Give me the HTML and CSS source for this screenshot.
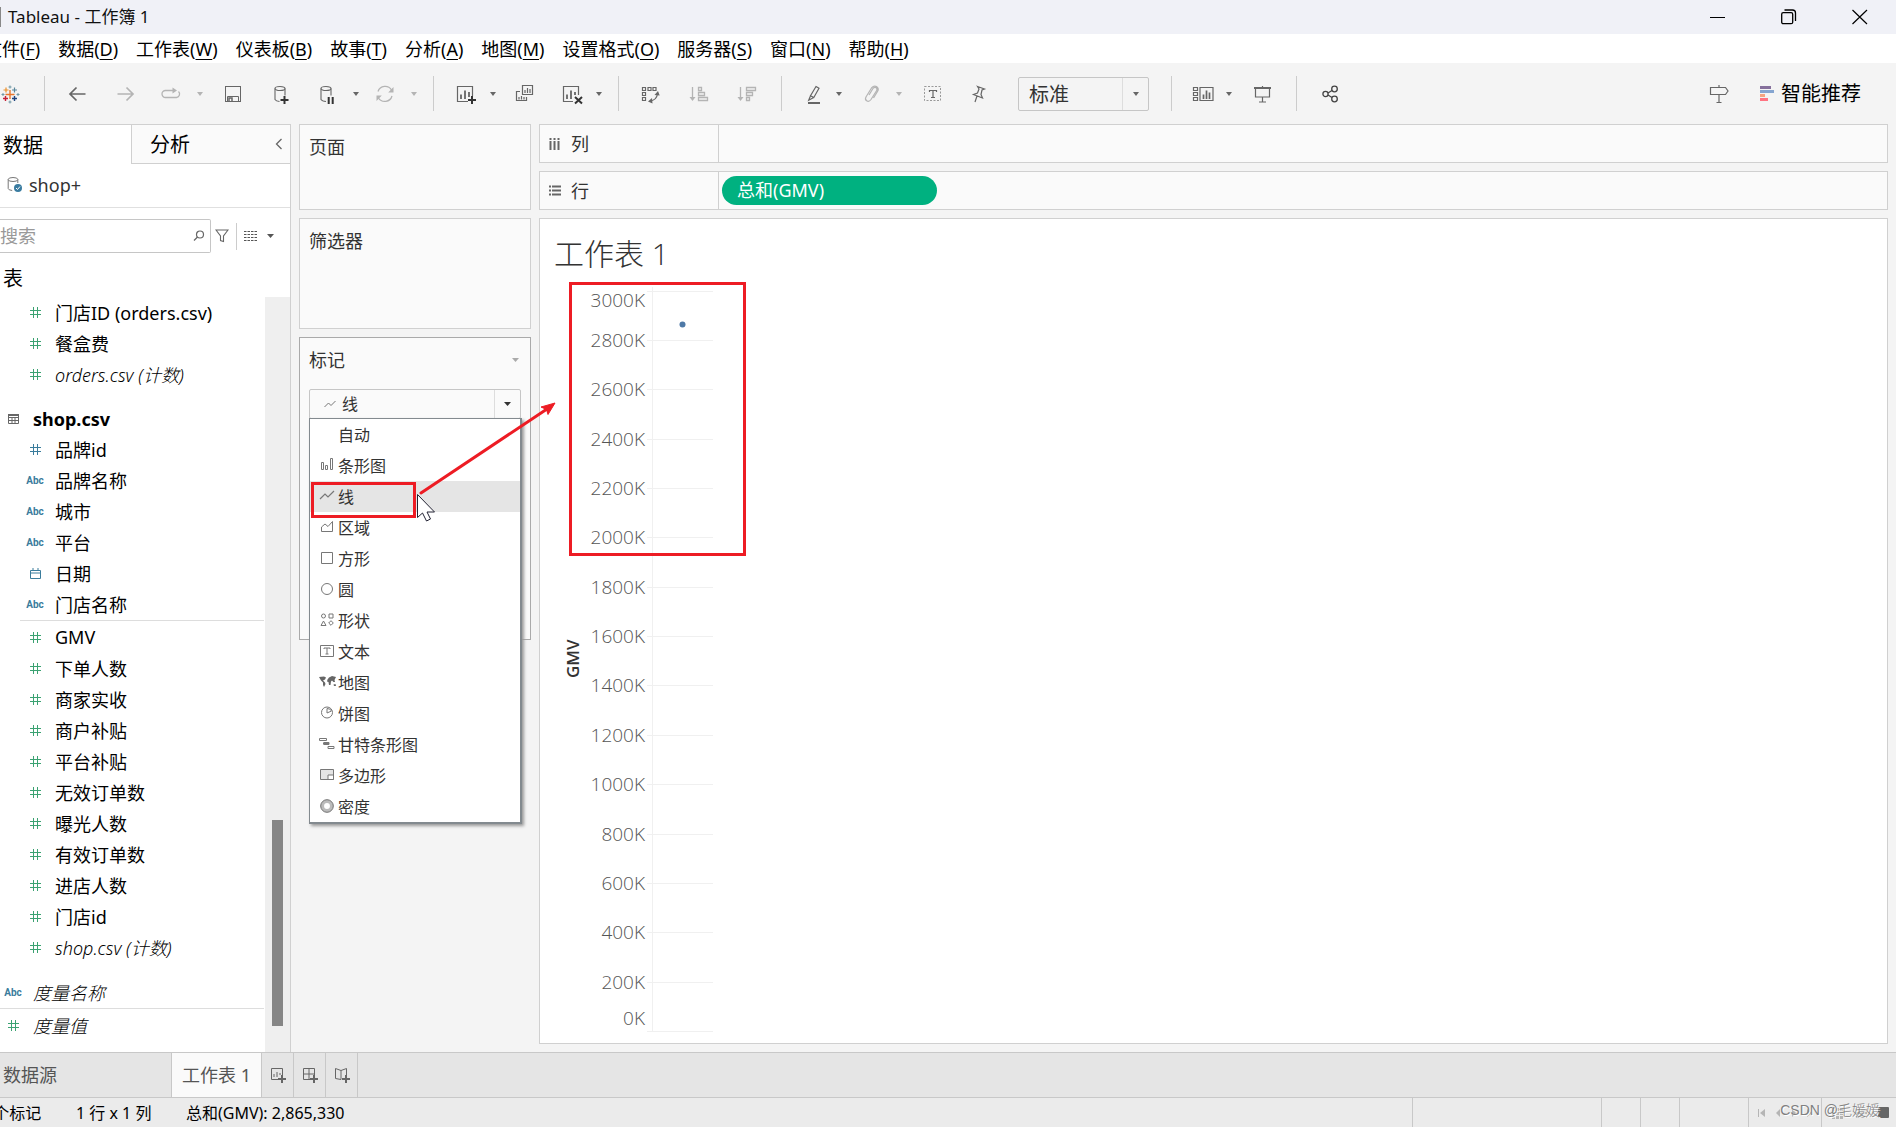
FILE: index.html
```html
<!DOCTYPE html>
<html lang="zh-CN">
<head>
<meta charset="utf-8">
<title>Tableau - 工作簿 1</title>
<link rel="stylesheet" href="styles.css">
</head>
<body>
<svg class="sprite" aria-hidden="true">
  <symbol id="hash" viewBox="0 0 11 11"><path d="M3.5 0v11M7.5 0v11M0 3.5h11M0 7.5h11" stroke="currentColor"/></symbol>
  <symbol id="caret" viewBox="0 0 10 6"><path d="M2 1h6L5 5z" fill="currentColor"/></symbol>
</svg>
<div class="app">
  <header class="titlebar">
    <span class="app-edge"></span>
    <h1>Tableau - 工作簿 1</h1>
    <div class="window-buttons">
      <button aria-label="最小化"><svg width="16" height="16"><path d="M0 8.5h15" stroke="#000"/></svg></button>
      <button aria-label="还原"><svg width="16" height="16" fill="none" stroke="#000"><rect x=".7" y="3.7" width="11" height="11" rx="1.5" stroke-width="1.3"/><path d="M3.5 1h8q3 0 3 3v8" stroke-width="1.3"/></svg></button>
      <button aria-label="关闭"><svg width="16" height="16"><path d="M.5 1l14.500 14M15 1L.5 15" stroke="#000" stroke-width="1.2"/></svg></button>
    </div>
  </header>

  <nav class="menubar">
    <button>文件(<u>F</u>)</button>
    <button>数据(<u>D</u>)</button>
    <button>工作表(<u>W</u>)</button>
    <button>仪表板(<u>B</u>)</button>
    <button>故事(<u>T</u>)</button>
    <button>分析(<u>A</u>)</button>
    <button>地图(<u>M</u>)</button>
    <button>设置格式(<u>O</u>)</button>
    <button>服务器(<u>S</u>)</button>
    <button>窗口(<u>N</u>)</button>
    <button>帮助(<u>H</u>)</button>
  </nav>

  <div class="toolbar">
    <button class="tool" aria-label="开始页面"><svg width="24" height="24" fill="none"><path d="M12 8v9M7.500 12.500h9" stroke="#e8762c" stroke-width="1.400"/><path d="M5.500 8h5M8 5.500v5" stroke="#eb912c" stroke-width="1.200"/><path d="M14 8h5M16.500 5.500v5" stroke="#59879b" stroke-width="1.200"/><path d="M5 16.500h5M7.500 14v5" stroke="#c72035" stroke-width="1.400"/><path d="M14 16.500h5M16.500 14v5" stroke="#1f447e" stroke-width="1.400"/><path d="M10.500 5h3M12 3.500v3M10.500 20h3M12 18.500v3M3.500 12.500h3M5 11v3M18.500 12.500h3M20 11v3" stroke="#7199a6"/></svg></button>
    <span class="sep g22"></span>
    <button class="tool g20" aria-label="撤消"><svg width="24" height="24" fill="none" stroke="currentColor" stroke-width="1.700"><path d="M20.500 12H5M11.500 5.500L5 12l6.500 6.500"/></svg></button>
    <button class="tool off g24" aria-label="重做"><svg width="24" height="24" fill="none" stroke="currentColor" stroke-width="1.700"><path d="M4.500 12H20M13.500 5.500L20 12l-6.500 6.500"/></svg></button>
    <button class="tool off g22" aria-label="重播"><svg width="24" height="24" fill="none" stroke="currentColor" stroke-width="1.300"><path d="M15 8.500H6.500a3.500 3.500 0 0 0 0 7h11a3.500 3.500 0 0 0 2-6"/><path d="M13.500 5.500l4.500 3-4.500 3z" fill="currentColor" stroke="none"/></svg></button>
    <button class="drop off g12" aria-label="重播选项"><svg width="10" height="6"><use href="#caret"/></svg></button>
    <button class="tool g16" aria-label="保存"><svg width="24" height="24" fill="none" stroke="currentColor"><rect x="4.500" y="4.500" width="15" height="15"/><path d="M6.500 19v-4.500h11V19"/><path d="M8 19v-3h3v3" stroke-width="1.500"/></svg></button>
    <button class="tool g24" aria-label="新建数据源"><svg width="24" height="24" fill="none" stroke="currentColor" stroke-width="1.100"><ellipse cx="11" cy="6.500" rx="5" ry="2"/><path d="M6 6.500v11q1 1.700 4.500 2M16 6.500v7"/><path d="M15.500 14v8M11.500 18h8" stroke="#333" stroke-width="2"/></svg></button>
    <button class="tool g22" aria-label="暂停自动更新"><svg width="24" height="24" fill="none" stroke="currentColor" stroke-width="1.100"><ellipse cx="11" cy="6.500" rx="5" ry="2"/><path d="M6 6.500v11q1 1.700 5 2M16 6.500v7"/><path d="M13.700 15v7M17.700 15v7" stroke="#333" stroke-width="2"/></svg></button>
    <button class="drop g12" aria-label="自动更新选项"><svg width="10" height="6"><use href="#caret"/></svg></button>
    <button class="tool off g12" aria-label="运行更新"><svg width="24" height="24" fill="none" stroke="currentColor" stroke-width="1.300"><path d="M5 9.500a7.500 7.500 0 0 1 13.500-1.500M19 14a7.500 7.500 0 0 1-13.500 2"/><path d="M20.500 5v5.500h-5.300zM3.500 19v-5.500h5.300z" fill="currentColor" stroke="none"/></svg></button>
    <button class="drop off g12" aria-label="运行更新选项"><svg width="10" height="6"><use href="#caret"/></svg></button>
    <span class="sep g14"></span>
    <button class="tool g20" aria-label="新建工作表"><svg width="24" height="24" fill="none" stroke="currentColor"><path d="M14 19.500H3.500v-15h15V14" stroke-width="1.200"/><path d="M7 12.500V17M11 8.500V17M15 10v5" stroke-width="1.800"/><path d="M18 14v8M14 18h8" stroke="#333" stroke-width="2"/></svg></button>
    <button class="drop g10" aria-label="新建工作表选项"><svg width="10" height="6"><use href="#caret"/></svg></button>
    <button class="tool g14" aria-label="复制工作表"><svg width="24" height="24" fill="none" stroke="currentColor" stroke-width="1.200"><path d="M10.500 3.500h10v9h-10zM8 9.500H4.500v9h10V15"/><path d="M13 8v3M15.500 6v5M18 7v4M7 15v2.500M9.500 14v3.500M12 15v2.500"/></svg></button>
    <button class="tool g24" aria-label="清除工作表"><svg width="24" height="24" fill="none" stroke="currentColor"><path d="M13 19.500H3.500v-15h15V13" stroke-width="1.200"/><path d="M7 12.500V17M11 8.500V17M15 10v3" stroke-width="1.800"/><path d="M15 15l7 6.500M22 15l-7 6.500" stroke="#333" stroke-width="2"/></svg></button>
    <button class="drop g10" aria-label="清除工作表选项"><svg width="10" height="6"><use href="#caret"/></svg></button>
    <span class="sep g14"></span>
    <button class="tool g20" aria-label="交换行和列"><svg width="24" height="24" fill="none" stroke="currentColor" stroke-width="1.200"><path d="M3.500 5.500h3v3h-3zM9 5.500h3v3H9zM14 5.500h3v3h-3zM3.500 10.500h3v3h-3zM3.500 15.500h3v3h-3z"/><path d="M18.500 12q-1 6-7 7"/><path d="M15.500 13l3.500-4 1.700 4.500zM13 16l-4 3.500 4.500 2z" fill="currentColor" stroke="none"/></svg></button>
    <button class="tool off g24" aria-label="升序排序"><svg width="24" height="24" fill="none" stroke="currentColor" stroke-width="1.300"><path d="M5.500 5v12M11.500 5.500h3v3h-3zM11.500 10.500h6v3h-6zM11.500 15.500h9v3h-9z"/><path d="M2.500 15h6l-3 4z" fill="currentColor" stroke="none"/></svg></button>
    <button class="tool off g24" aria-label="降序排序"><svg width="24" height="24" fill="none" stroke="currentColor" stroke-width="1.300"><path d="M5.500 5v12M11.500 5.500h9v3h-9zM11.500 10.500h6v3h-6zM11.500 15.500h3v3h-3z"/><path d="M2.500 15h6l-3 4z" fill="currentColor" stroke="none"/></svg></button>
    <span class="sep g22"></span>
    <button class="tool g20" aria-label="突出显示"><svg width="24" height="24" fill="none" stroke="currentColor" stroke-width="1.200"><path d="M14 4.500l3 1.700-5.200 9.300-3.300-1.800zM8.500 13.700l-1.800 4.500 5-2.700" /><path d="M6 21h12" stroke-width="2"/></svg></button>
    <button class="drop g8" aria-label="突出显示选项"><svg width="10" height="6"><use href="#caret"/></svg></button>
    <button class="tool off g16" aria-label="组成员"><svg width="24" height="24" fill="none" stroke="currentColor" stroke-width="1.200"><path d="M9 13l4-6.500q1.500-2 3.200-.8 1.500 1.100.3 3.100l-5.500 8.700q-2 2.700-4.300 1.300-2.200-1.600-.6-4.100L11.500 6q2.500-3 5-1.500 3 2 1 5l-4 6.500"/></svg></button>
    <button class="drop off g10" aria-label="组选项"><svg width="10" height="6"><use href="#caret"/></svg></button>
    <button class="tool g16" aria-label="显示标记标签"><svg width="24" height="24" fill="none" stroke="currentColor"><rect x="4.500" y="4.500" width="16" height="14" stroke-dasharray="2 1.500" stroke="#999"/><path d="M9.500 10V8.500h7V10M13 8.500v7M11 15.500h4" stroke-width="1.200"/></svg></button>
    <button class="tool g22" aria-label="固定"><svg width="24" height="24" fill="none" stroke="currentColor" stroke-width="1.200"><path d="M11.500 4.500l7 2.500-2.500 1-1 4.500 1.500 3.500-9-3.500 4-1.500 1.500-4zM11 14l-2 6"/></svg></button>
    <label class="fit g28"><select aria-label="适合"><option>标准</option></select><svg width="10" height="6"><use href="#caret"/></svg></label>
    <span class="sep g22"></span>
    <button class="tool g20" aria-label="显示/隐藏卡"><svg width="24" height="24" fill="none" stroke="currentColor" stroke-width="1.200"><path d="M1.500 5.500h4v3h-4zM1.500 10.500h4v3h-4zM1.500 15.500h4v3h-4zM8 5.500h13v13H8z"/><path d="M11.500 12.500V17M14.500 8.500V17M17.500 10.500V17" stroke-width="1.700"/></svg></button>
    <button class="drop g8" aria-label="显示/隐藏卡选项"><svg width="10" height="6"><use href="#caret"/></svg></button>
    <button class="tool g16" aria-label="演示模式"><svg width="24" height="24" fill="none" stroke="currentColor" stroke-width="1.200"><path d="M5.500 6.500v8.500h14V6.500M12.500 15v5M9 20h7M12.500 4v2"/><path d="M4 6h17" stroke-width="2"/></svg></button>
    <span class="sep g22"></span>
    <button class="tool dark g22" aria-label="共享"><svg width="24" height="24" fill="none" stroke="currentColor" stroke-width="1.300"><circle cx="6.500" cy="12" r="2.600"/><circle cx="15.500" cy="7" r="2.800"/><circle cx="15.500" cy="17" r="2.800"/><path d="M9 11l4-2.500M9 13l4 2.500"/></svg></button>
    <button class="tool guide" aria-label="数据指南"><svg width="24" height="24" fill="none" stroke="currentColor" stroke-width="1.200"><path d="M3.500 5.500h15l2.500 3.500-2.500 3.500h-15zM12 3v2.500M12 12.500V20M9.500 20.500h5"/></svg></button>
    <button class="showme"><svg width="14" height="16"><path d="M0 0h11v3H0z" fill="#86709c"/><path d="M0 4h14v3H0z" fill="#85a5d0"/><path d="M0 8h5v3H0z" fill="#f4a582"/><path d="M0 12h8v3H0z" fill="#ff7482"/></svg>智能推荐</button>
  </div>

  <main class="workspace">
    <aside class="data-pane">
      <div class="pane-tabs">
        <button class="pane-tab active">数据</button>
        <button class="pane-tab">分析</button>
        <button class="collapse" aria-label="折叠"><svg width="8" height="12"><path d="M6.500 1l-5 5 5 5" fill="none" stroke="#666" stroke-width="1.300"/></svg></button>
      </div>
      <a class="source" href="#"><svg width="16" height="18" fill="none" stroke="#777"><ellipse cx="6" cy="3.500" rx="4.800" ry="2"/><path d="M1.200 3.500v9q0 1.500 4 2M10.800 3.500V7"/><circle cx="11" cy="12" r="4" fill="#3a7ca0" stroke="none"/><path d="M9 12l1.500 1.500L13 10.500" stroke="#fff"/></svg>shop+</a>
      <div class="search-row">
        <label class="search"><input type="text" placeholder="搜索" aria-label="搜索"><svg width="12" height="12" fill="none" stroke="#666" stroke-width="1.200"><circle cx="7" cy="4.500" r="3.500"/><path d="M4.500 7L1 10.500"/></svg></label>
        <button class="filter" aria-label="筛选"><svg width="14" height="14"><path d="M1 1h12L8.500 7v5.500l-3-1V7z" fill="none" stroke="#666" stroke-width="1.100"/></svg></button>
        <button class="view-as" aria-label="查看方式"><svg width="13" height="10"><path d="M0 .5h13M0 3.500h13M0 6.500h13M0 9.500h13" stroke="#555" stroke-dasharray="2.500 1"/></svg><svg width="10" height="6"><path d="M2 1h7L5.500 5z" fill="#555"/></svg></button>
      </div>
      <h2>表</h2>
      <div class="tree">
        <ul class="fields">
          <li class="field"><svg class="num" width="11" height="11"><use href="#hash"/></svg>门店ID (orders.csv)</li>
          <li class="field"><svg class="num" width="11" height="11"><use href="#hash"/></svg>餐盒费</li>
          <li class="field generated"><svg class="num" width="11" height="11"><use href="#hash"/></svg>orders.csv (计数)</li>
          <li class="field root table-name"><svg width="11" height="10" fill="none" stroke="#666"><path d="M.5.500h10v9H.5zM0 3.500h11M0 6.500h11M4 3v7M7 3v7"/><path d="M0 1h11" stroke-width="2"/></svg>shop.csv</li>
          <li class="field"><svg class="dim" width="11" height="11"><use href="#hash"/></svg>品牌id</li>
          <li class="field"><i>Abc</i>品牌名称</li>
          <li class="field"><i>Abc</i>城市</li>
          <li class="field"><i>Abc</i>平台</li>
          <li class="field"><svg class="dim" width="11" height="11" fill="none" stroke="currentColor"><path d="M.5 2.500h10v8H.5zM0 5h11M3 0v3M8 0v3"/></svg>日期</li>
          <li class="field"><i>Abc</i>门店名称</li>
          <li class="field measures"><svg class="num" width="11" height="11"><use href="#hash"/></svg>GMV</li>
          <li class="field"><svg class="num" width="11" height="11"><use href="#hash"/></svg>下单人数</li>
          <li class="field"><svg class="num" width="11" height="11"><use href="#hash"/></svg>商家实收</li>
          <li class="field"><svg class="num" width="11" height="11"><use href="#hash"/></svg>商户补贴</li>
          <li class="field"><svg class="num" width="11" height="11"><use href="#hash"/></svg>平台补贴</li>
          <li class="field"><svg class="num" width="11" height="11"><use href="#hash"/></svg>无效订单数</li>
          <li class="field"><svg class="num" width="11" height="11"><use href="#hash"/></svg>曝光人数</li>
          <li class="field"><svg class="num" width="11" height="11"><use href="#hash"/></svg>有效订单数</li>
          <li class="field"><svg class="num" width="11" height="11"><use href="#hash"/></svg>进店人数</li>
          <li class="field"><svg class="num" width="11" height="11"><use href="#hash"/></svg>门店id</li>
          <li class="field generated"><svg class="num" width="11" height="11"><use href="#hash"/></svg>shop.csv (计数)</li>
          <li class="field root generated names"><i>Abc</i>度量名称</li>
          <li class="field root generated values"><svg class="num" width="11" height="11"><use href="#hash"/></svg>度量值</li>
        </ul>
        <div class="scrollbar"><div class="thumb"></div></div>
      </div>
    </aside>

    <div class="cards">
      <section class="card pages"><h3>页面</h3></section>
      <section class="card filters"><h3>筛选器</h3></section>
      <section class="card marks">
        <h3>标记 <svg width="10" height="6"><path d="M1 1h7L4.500 5z" fill="#aaa"/></svg></h3>
        <div class="mark-type">
          <svg class="mark-icon" width="12" height="8"><path d="M.5 7l4-4 2.500 2.500L11.500 1" fill="none" stroke="#777"/></svg>
          <select aria-label="标记类型"><option>线</option></select>
          <span class="mark-caret"><svg width="10" height="6"><path d="M1 1h7L4.500 5z" fill="#333"/></svg></span>
          <ul class="mark-menu" role="listbox" aria-label="标记类型">
            <li role="option"><svg width="16" height="16"></svg>自动</li>
            <li role="option"><svg width="16" height="16"><path d="M2.500 5.500h2v7h-2zM6.500 8.500h2v4h-2zM11.500 1.500h2v11h-2z"/></svg>条形图</li>
            <li role="option" class="selected" aria-selected="true"><svg width="16" height="16"><path d="M1 11l5-5 3 3 6-6" stroke-width="1.200"/></svg>线</li>
            <li role="option"><svg width="16" height="16"><path d="M2.500 12.500V8L6 5l3 2.500 4.500-5v10z"/></svg>区域</li>
            <li role="option"><svg width="16" height="16"><path d="M2.500 2.500h11v11h-11z"/></svg>方形</li>
            <li role="option"><svg width="16" height="16"><circle cx="8" cy="8" r="5.500"/></svg>圆</li>
            <li role="option"><svg width="16" height="16"><circle cx="4.500" cy="4" r="2"/><path d="M10 2h4v4h-4zM4.500 9L2 13.500h5zM12 8.700L14.300 11 12 13.300 9.700 11z"/></svg>形状</li>
            <li role="option"><svg width="16" height="16"><path d="M1.500 2.500h13v11h-13zM5 6V5h6v1M8 5v6M6.500 11h3"/></svg>文本</li>
            <li role="option"><svg width="18" height="16"><path d="M0 3l5-.500 2 1-1 2-2 1 2 2 .500 1.500-1.500 3-1-2 0-2.500-2-2zM8.500 5.500l1.500-2 3-1.500 4 1-1.500 3 .500 2-1.500 0-1.500-1.500-1 1-.5 3.500-1.500 0-.500-3-1.500-.5zM14.500 10.500l2-.5.5 2h-2z" fill="#666" stroke="none"/></svg>地图</li>
            <li role="option"><svg width="16" height="16"><circle cx="8" cy="7.500" r="5.500"/><path d="M8 8V3.500q3.500 0 4.500 2.500z"/></svg>饼图</li>
            <li role="option"><svg width="16" height="16"><path d="M.5 2.500h7v2h-7zM5 6.500h5v2H5zM9 10.500h6v2H9z"/><path d="M4 7.500h6" stroke-width="2"/></svg>甘特条形图</li>
            <li role="option"><svg width="16" height="16"><path d="M1.500 2.500h13v10h-13z" fill="#e4e4e4"/><path d="M9 8h5.500v4.500H9z" fill="#fff"/></svg>多边形</li>
            <li role="option"><svg width="16" height="16"><circle cx="8" cy="8" r="4.700" stroke="#bbb" stroke-width="3.500"/><circle cx="8" cy="8" r="6.300"/></svg>密度</li>
          </ul>
        </div>
      </section>
    </div>

    <div class="sheet">
      <div class="shelf">
        <div class="shelf-name"><svg width="12" height="12"><path d="M1.500 0v2M5.500 0v2M9.500 0v2M1.500 3v9M5.500 3v9M9.500 3v9" stroke="#666" stroke-width="2"/></svg>列</div>
        <div class="shelf-body"></div>
      </div>
      <div class="shelf">
        <div class="shelf-name"><svg width="12" height="12"><path d="M0 1.500h2M0 5.500h2M0 9.500h2M3 1.500h9M3 5.500h9M3 9.500h9" stroke="#666" stroke-width="2"/></svg>行</div>
        <div class="shelf-body"><button class="pill">总和(GMV)</button></div>
      </div>
      <section class="view">
        <h2>工作表 1</h2>
        <svg class="chart" width="180" height="762" role="img" aria-label="GMV">
          <path d="M98.500 7v745" stroke="#f0f0f0"/>
          <path d="M93 11.500h66M93 60.500h66M93 109.500h66M93 159.500h66M93 208.500h66M93 257.500h66M93 307.500h66M93 356.500h66M93 405.500h66M93 455.500h66M93 504.500h66M93 554.500h66M93 603.500h66M93 652.500h66M93 702.500h66M93 751.500h66" stroke="#f0f0f0"/>
          <g class="ticks">
            <text x="91" y="27">3000K</text><text x="91" y="67">2800K</text><text x="91" y="116">2600K</text><text x="91" y="166">2400K</text>
            <text x="91" y="215">2200K</text><text x="91" y="264">2000K</text><text x="91" y="314">1800K</text><text x="91" y="363">1600K</text>
            <text x="91" y="412">1400K</text><text x="91" y="462">1200K</text><text x="91" y="511">1000K</text><text x="91" y="561">800K</text>
            <text x="91" y="610">600K</text><text x="91" y="659">400K</text><text x="91" y="709">200K</text><text x="91" y="745">0K</text>
          </g>
          <text class="axis-title" transform="translate(25 398) rotate(-90)">GMV</text>
          <circle cx="128.500" cy="44.500" r="3" fill="#4e79a7"/>
        </svg>
      </section>
    </div>
  </main>

  <footer class="sheet-tabs">
    <button class="source-tab">数据源</button>
    <button class="sheet-tab">工作表 1</button>
    <button class="add" aria-label="新建工作表"><svg width="16" height="16" fill="none" stroke="#666"><path d="M8 12.500H1.500V1.500h11V8M4 7v3M7 5v5M10 6v2"/><path d="M12 8v8M8 12h8" stroke-width="2"/></svg></button>
    <button class="add" aria-label="新建仪表板"><svg width="16" height="16" fill="none" stroke="#666"><path d="M8 12.500H1.500V1.500h11V8M1.500 7h11M7 1.500v11"/><path d="M12 8v8M8 12h8" stroke-width="2"/></svg></button>
    <button class="add" aria-label="新建故事"><svg width="16" height="16" fill="none" stroke="#666"><path d="M7 12.500l-5.500-1V1.500L7 3.500l5.500-2V8M7 3.500v9"/><path d="M12 8v8M8 12h8" stroke-width="2"/></svg></button>
  </footer>

  <footer class="status">
    <span class="marks-count">1 个标记</span>
    <span class="dimensions">1 行 x 1 列</span>
    <span>总和(GMV): 2,865,330</span>
    <div class="status-cells">
      <span class="cell w189"></span><span class="cell w39"></span><span class="cell w39"></span><span class="cell w69"></span>
      <span class="cell w73"><svg width="72" height="12" fill="#b5b5b5"><path d="M9 2h1v8H9zM16 2v8l-5-4zM31 2v8l-4-4zM43 2v8l4-4zM58 2v8l5-4z"/></svg></span>
      <span class="cell w75"><svg width="74" height="12" fill="#b5b5b5"><path d="M10 1h3v3h-3zM14 1h3v3h-3zM18 1h3v3h-3zM10 5h3v3h-3zM14 5h3v3h-3zM18 5h3v3h-3zM10 9h3v3h-3zM14 9h3v3h-3zM18 9h3v3h-3zM34 2h11v2H34zM34 5h11v2H34zM34 9h11v2H34z"/><rect x="56" y="0" width="11" height="11" rx="1" fill="#666"/></svg></span>
      <span class="watermark">CSDN @毛媛媛</span>
    </div>
  </footer>

  <svg class="callouts" width="760" height="570" fill="none" stroke="#ed1c24" aria-hidden="true">
    <rect x="570.500" y="283.500" width="174" height="271" stroke-width="3"/>
    <rect x="312.500" y="483.500" width="102" height="33" stroke-width="3"/>
    <path d="M421 493L547 409" stroke-width="3" stroke-linecap="round"/>
    <path d="M555 403l-7 11.500-1.500-5-5.500-2.500z" fill="#ed1c24" stroke-width="1"/>
    <path d="M417.500 494.500v23l5-4.500 4 8 4-2-3.500-7h7.500z" fill="#fff" stroke="#223"/>
  </svg>
</div>
</body>
</html>
```

FILE: styles.css
```css
* { box-sizing: border-box; }

body {
  margin: 0;
  font-family: "Noto Sans", "Noto Sans CJK SC", sans-serif;
  font-size: 18px;
  line-height: 24px;
  color: #000;
  background: #f4f4f4;
  overflow: hidden;
}

h1, h2, h3, ul { margin: 0; padding: 0; font-weight: 400; font-size: 18px; }
ul { list-style: none; }
svg { display: block; flex: none; }
a { color: inherit; text-decoration: none; }

button, select, input {
  margin: 0;
  padding: 0;
  border: 0;
  border-radius: 0;
  background: none;
  color: inherit;
  font: inherit;
}
select, input { appearance: none; outline: 0; }

.sprite { position: absolute; width: 0; height: 0; }

.app {
  position: relative;
  display: flex;
  flex-direction: column;
  min-height: 100vh;
}

/* Title bar */
.titlebar { display: flex; align-items: center; height: 34px; background: #f0f1f7; }
.titlebar h1 { flex: 1; margin-left: 7px; font-size: 17px; color: #111; }
.app-edge { width: 1px; height: 20px; background: #888; }
.window-buttons { display: flex; gap: 2px; margin-right: 2px; }
.window-buttons button { display: grid; place-items: center; width: 69px; height: 34px; }

/* Menu bar */
.menubar {
  display: flex;
  gap: 18px;
  height: 29px;
  margin-left: -16px;
  background: #fff;
}
.menubar button { white-space: nowrap; }
.menubar u { text-underline-offset: 3px; }

/* Toolbar */
.toolbar { display: flex; align-items: center; height: 61px; color: #666; margin-left: -2px; }
.tool { width: 24px; height: 24px; flex: none; }
.drop { width: 10px; height: 24px; flex: none; display: flex; align-items: center; }
.off { color: #b4b4b4; }
.dark { color: #444; }
.sep { width: 1px; height: 35px; background: #ccc; }
.g8 { margin-left: 8px; }
.g10 { margin-left: 10px; }
.g12 { margin-left: 12px; }
.g14 { margin-left: 14px; }
.g16 { margin-left: 16px; }
.g20 { margin-left: 20px; }
.g22 { margin-left: 22px; }
.g24 { margin-left: 24px; }
.g28 { margin-left: 28px; }
.fit {
  display: flex;
  align-items: center;
  width: 131px;
  height: 34px;
  border: 1px solid #c6c6c6;
  border-radius: 2px;
}
.fit select {
  width: 104px;
  height: 32px;
  padding: 2px 0 0 10px;
  border-right: 1px solid #ddd;
  font-size: 20px;
  color: #333;
}
.fit svg { margin-left: 8px; }
.guide { margin-left: auto; }
.showme {
  display: flex;
  align-items: center;
  gap: 7px;
  margin: 0 35px 0 29px;
  font-size: 20px;
  color: #000;
}

/* Workspace */
.workspace { flex: 1; display: flex; gap: 8px; padding-right: 8px; }

.data-pane {
  display: flex;
  flex-direction: column;
  width: 291px;
  background: #fff;
  border: solid #d0d0d0;
  border-width: 1px 1px 0 0;
}
.pane-tabs { display: flex; height: 39px; font-size: 20px; }
.pane-tab { width: 131px; padding: 2px 0 0 3px; text-align: left; }
.pane-tab:nth-child(2) {
  width: 133px;
  padding-left: 18px;
  background: #fafafa;
  border: solid #d0d0d0;
  border-width: 0 0 1px 1px;
}
.collapse {
  flex: 1;
  padding-left: 11px;
  background: #fafafa;
  border-bottom: 1px solid #d0d0d0;
}
.source {
  display: flex;
  align-items: center;
  gap: 6px;
  height: 44px;
  padding: 0 0 2px 7px;
  border-bottom: 1px solid #e0e0e0;
  color: #333;
}
.search-row { display: flex; align-items: center; height: 34px; margin-top: 11px; }
.search {
  display: flex;
  align-items: center;
  width: 211px;
  height: 34px;
  border: 1px solid #c6c6c6;
  border-left: 0;
  border-radius: 0 2px 2px 0;
}
.search input { width: 193px; }
.search input::placeholder { color: #999; opacity: 1; }
.filter { padding: 0 4px; }
.view-as {
  display: flex;
  align-items: center;
  gap: 8px;
  height: 27px;
  margin-left: 3px;
  padding-left: 7px;
  border-left: 1px solid #ccc;
}
.data-pane h2 { padding: 14px 0 6px 3px; font-size: 20px; }
.tree { flex: 1; display: flex; justify-content: space-between; }
.fields { width: 264px; }
.field {
  display: grid;
  grid-template-columns: 20px 1fr;
  align-items: center;
  column-gap: 10px;
  height: 31px;
  margin-left: 25px;
  white-space: nowrap;
}
.field svg { justify-self: center; }
.field i { font: 700 10px/12px "Roboto", sans-serif; color: #3a7c9c; justify-self: center; }
.num { color: #3ba272; }
.dim { color: #3a7c9c; }
.generated { font-style: italic; font-weight: 300; }
.root { margin-left: 3px; }
.table-name { margin-top: 13px; font-weight: 700; }
.measures {
  height: 33px;
  margin-left: 20px;
  padding-left: 5px;
  border-top: 1px solid #ddd;
}
.names { margin-top: 14px; }
.values { height: 34px; margin-left: 0; padding-left: 3px; border-top: 1px solid #ddd; }
.scrollbar { width: 25px; padding: 523px 7px 26px; background: #efefef; }
.thumb { height: 206px; background: #868686; }

.cards { display: flex; flex-direction: column; gap: 8px; width: 232px; }
.card {
  padding: 10px 9px 0;
  background: #fafafa;
  border: 1px solid #d0d0d0;
  color: #333;
}
.pages { height: 86px; }
.filters { height: 111px; }
.marks { height: 303px; border-color: #aaa; }
.marks h3 { display: flex; justify-content: space-between; align-items: center; color: #333; }
.mark-type { position: relative; display: flex; align-items: center; margin-top: 17px; }
.mark-type select {
  width: 212px;
  height: 30px;
  padding-left: 32px;
  border: 1px solid #c6c6c6;
  border-radius: 2px;
  font-size: 16px;
  color: #333;
}
.mark-icon { position: absolute; left: 15px; }
.mark-caret {
  position: absolute;
  right: 1px;
  display: grid;
  place-items: center;
  width: 26px;
  height: 28px;
  border-left: 1px solid #ddd;
  pointer-events: none;
}
.mark-menu {
  position: absolute;
  top: 29px;
  left: 0;
  width: 213px;
  background: #fff;
  border: 1px solid #838a8f;
  border-right-width: 2px;
  border-bottom-width: 2px;
  box-shadow: 2px 2px 3px #999;
  color: #333;
}
.mark-menu li {
  display: flex;
  align-items: center;
  gap: 3px;
  height: 31px;
  padding-left: 9px;
  font-size: 16px;
}
.mark-menu svg { width: 16px; overflow: visible; fill: none; stroke: #777; margin-bottom: 2px; }
.mark-menu .selected { background: #e5e5e5; }

.sheet { flex: 1; display: flex; flex-direction: column; gap: 8px; padding-bottom: 8px; }
.shelf {
  display: flex;
  height: 39px;
  background: #fafafa;
  border: 1px solid #d0d0d0;
}
.shelf-name {
  display: flex;
  align-items: center;
  gap: 10px;
  width: 179px;
  padding-left: 9px;
  border-right: 1px solid #d0d0d0;
  color: #333;
}
.shelf-body { flex: 1; padding: 4px 3px; }
.pill {
  width: 215px;
  height: 29px;
  padding: 0 0 2px 15px;
  border-radius: 15px;
  background: #00b180;
  color: #fff;
  text-align: left;
}
.view { flex: 1; padding: 15px 14px 0; background: #fff; border: 1px solid #d0d0d0; }
.view h2 { font-family: "Open Sans", "Noto Sans CJK SC", sans-serif; font-size: 30px; line-height: 40px; font-weight: 300; color: #333; }
.chart { margin-top: 6px; }
.ticks { font-family: "Open Sans", sans-serif; font-size: 19px; font-weight: 300; fill: #555; text-anchor: end; }
.axis-title { font-family: "Open Sans", sans-serif; font-size: 17px; fill: #333; font-weight: 600; text-anchor: start; }

/* Sheet tabs */
.sheet-tabs {
  display: flex;
  height: 46px;
  background: #e5e5e5;
  border: solid #c8c8c8;
  border-width: 1px 0;
  color: #555;
}
.sheet-tabs button { border-right: 1px solid #c8c8c8; }
.source-tab { width: 172px; padding-left: 3px; text-align: left; }
.sheet-tab { width: 90px; background: #fafafa; }
.add { width: 32px; display: grid; place-items: center; }

/* Status bar */
.status {
  display: flex;
  height: 29px;
  background: #ebebeb;
  font-size: 16px;
  line-height: 30px;
  white-space: nowrap;
}
.marks-count { width: 96px; margin-left: -20px; }
.dimensions { width: 110px; }
.status-cells { position: relative; display: flex; margin-left: auto; }
.cell { display: flex; align-items: center; border-left: 1px solid #c8c8c8; }
.w189 { width: 189px; }
.w39 { width: 39px; }
.w69 { width: 69px; }
.w73 { width: 73px; }
.w75 { width: 75px; }
.watermark {
  position: absolute;
  right: 16px;
  top: -3px;
  font-family: "Liberation Sans", "Noto Sans CJK SC", sans-serif;
  font-size: 14px;
  font-weight: 300;
  color: #808080;
  text-shadow: 1px 1px 0 #fff;
}

.callouts { position: absolute; top: 0; left: 0; pointer-events: none; }
```
